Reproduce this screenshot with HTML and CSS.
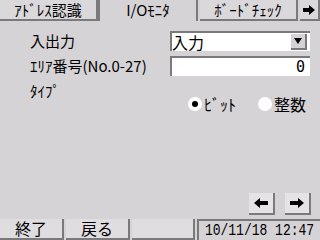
FILE: index.html
```html
<!DOCTYPE html>
<html lang="ja">
<head>
    <meta charset="UTF-8">
    <title>I/Oモニタ</title>
    <link rel="stylesheet" href="styles.css">
</head>
<body>
    <div class="screen">
        <div class="tabs">
            <div class="tab">ｱﾄﾞﾚｽ認識</div>
            <div class="tab active">I/Oﾓﾆﾀ</div>
            <div class="tab">ﾎﾞｰﾄﾞﾁｪｯｸ</div>
            <div class="tab-next">
                <svg width="12" height="10" viewBox="0 0 12 10"><path d="M0 3h6V0l6 5-6 5V7H0z" fill="#000"/></svg>
            </div>
        </div>

        <div class="form">
            <div class="row">
                <span class="label">入出力</span>
                <div class="select">
                    <span>入力</span>
                    <span class="drop">
                        <svg width="8" height="6" viewBox="0 0 8 6"><path d="M0 0h8L4 6z" fill="#000"/></svg>
                    </span>
                </div>
            </div>
            <div class="row">
                <span class="label">ｴﾘｱ番号(No.0-27)</span>
                <div class="field">0</div>
            </div>
            <div class="row top">
                <span class="label">ﾀｲﾌﾟ</span>
                <div class="radios">
                    <span class="radio"><span class="dot on"></span>ﾋﾞｯﾄ</span>
                    <span class="radio"><span class="dot"></span>整数</span>
                </div>
            </div>
        </div>

        <div class="arrows">
            <div class="abtn">
                <svg width="14" height="10" viewBox="0 0 14 10"><path d="M14 3H6V0L0 5l6 5V7h8z" fill="#000"/></svg>
            </div>
            <div class="abtn">
                <svg width="14" height="10" viewBox="0 0 14 10"><path d="M0 3h8V0l6 5-6 5V7H0z" fill="#000"/></svg>
            </div>
        </div>

        <div class="footer">
            <div class="fbtn">終了</div>
            <div class="fbtn">戻る</div>
            <div class="fbtn blank"></div>
            <div class="clock"><span>10/11/18 12:47</span></div>
        </div>
    </div>
</body>
</html>
```

FILE: styles.css
```css
body {
    margin: 0;
    background: #d6d3d6;
    font-family: "Noto Sans CJK JP", "DejaVu Sans", sans-serif;
    color: #000;
}
.screen {
    width: 320px;
    height: 240px;
    display: flex;
    flex-direction: column;
    overflow: hidden;
}
.tabs {
    display: flex;
    height: 21px;
    gap: 2px;
}
.tab {
    width: 96px;
    height: 19px;
    background: #dbd8db;
    border-right: 2px solid #7b797b;
    border-bottom: 2px solid #7b797b;
    font-size: 15px;
    line-height: 19px;
    text-align: center;
}
.tab.active {
    background: #d6d3d6;
    border-left: 2px solid #7b797b;
    border-bottom: none;
    height: 21px;
    width: 96px;
    margin-left: -2px;
}
.tab-next {
    width: 18px;
    height: 19px;
    background: #dbd8db;
    border-right: 2px solid #7b797b;
    border-bottom: 2px solid #7b797b;
    display: flex;
    align-items: center;
    justify-content: center;
}
.form {
    padding: 10px 10px 0 30px;
}
.row {
    display: flex;
    justify-content: space-between;
    align-items: center;
    height: 20px;
    margin-bottom: 5px;
}
.row.top {
    align-items: flex-start;
    margin-top: 3px;
}
.label {
    font-size: 15px;
    line-height: 20px;
}
.select {
    width: 138px;
    height: 18px;
    background: #fff;
    border-top: 2px solid #7b797b;
    border-left: 2px solid #7b797b;
    display: flex;
    justify-content: space-between;
    align-items: center;
    font-size: 16px;
    line-height: 18px;
}
.drop {
    width: 14px;
    height: 14px;
    margin-right: 3px;
    background: #d6d3d6;
    border-right: 2px solid #7b797b;
    border-bottom: 2px solid #7b797b;
    display: flex;
    align-items: center;
    justify-content: center;
}
.field {
    width: 133px;
    height: 18px;
    padding-right: 5px;
    background: #fff;
    border-top: 2px solid #7b797b;
    border-left: 2px solid #7b797b;
    text-align: right;
    font-family: "DejaVu Sans Mono", monospace;
    font-size: 15px;
    line-height: 18px;
}
.radios {
    display: flex;
    gap: 22px;
    margin-top: 11px;
    padding-right: 4px;
}
.radio {
    display: flex;
    align-items: center;
    font-size: 16px;
}
.dot {
    width: 14px;
    height: 14px;
    border-radius: 50%;
    background: #fff;
    margin-right: 2px;
    position: relative;
}
.dot.on::after {
    content: "";
    position: absolute;
    left: 4px;
    top: 4px;
    width: 6px;
    height: 6px;
    border-radius: 50%;
    background: #000;
}
.arrows {
    margin-top: auto;
    display: flex;
    justify-content: flex-end;
    gap: 10px;
    padding-right: 9px;
    margin-bottom: 4px;
}
.abtn {
    width: 24px;
    height: 20px;
    background: #e6e3e6;
    border-right: 2px solid #7b797b;
    border-bottom: 2px solid #7b797b;
    display: flex;
    align-items: center;
    justify-content: center;
}
.footer {
    display: flex;
    gap: 2px;
    height: 21px;
}
.fbtn {
    width: 62px;
    height: 19px;
    background: #e0dde0;
    border-right: 2px solid #7b797b;
    border-bottom: 2px solid #7b797b;
    font-size: 16px;
    line-height: 19px;
    text-align: center;
}
.fbtn.blank {
    flex: 1;
}
.clock {
    width: 121px;
    height: 21px;
    border-left: 2px solid #7b797b;
    border-top: 2px solid #7b797b;
    font-family: "Liberation Mono", monospace;
    font-size: 13px;
    line-height: 20px;
    text-align: center;
}
.clock span {
    display: inline-block;
    transform: scaleY(1.3);
}
```
